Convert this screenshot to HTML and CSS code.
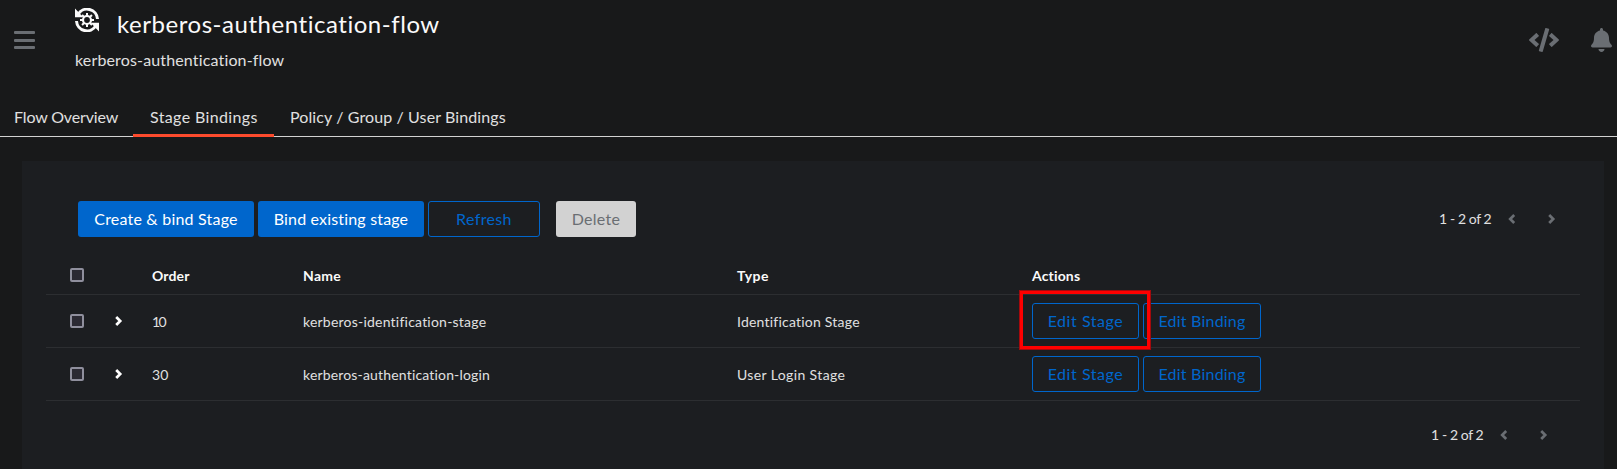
FILE: index.html
```
<!DOCTYPE html>
<html lang="en">
<head>
<meta charset="utf-8">
<title>kerberos-authentication-flow</title>
<link rel="stylesheet" href="styles.css">
</head>
<body>
<svg class="sprite" width="0" height="0">
  <symbol id="left" viewBox="0 0 8 10"><path d="M6.200 1 2.200 5l4 4" fill="none" stroke="currentColor" stroke-width="2.700"/></symbol>
  <symbol id="right" viewBox="0 0 8 10"><path d="M1.200 1l4 4-4 4" fill="none" stroke="currentColor" stroke-width="2.700"/></symbol>
</svg>
<header class="header">
  <button class="burger" aria-label="Menu"><i></i><i></i><i></i></button>
  <div class="heading">
    <div class="title-row">
      <svg class="flow-icon" viewBox="0 0 24 24" fill="none" stroke="currentColor">
        <path d="M3.200 6.200A10.400 10.400 0 0 1 22.500 11M20.800 17.800A10.400 10.400 0 0 1 1.500 13" stroke-width="3"/>
        <path d="M0 .5v8.700h8.300zM24 23.500v-8.700h-8.300z" fill="currentColor" stroke="none"/>
        <circle cx="12" cy="12" r="4" stroke-width="2.200"/>
        <path d="M12 5v3M12 16v3M5 12h3M16 12h3M7.050 7.050l2 2M14.950 14.950l2 2M7.050 16.950l2-2M14.950 9.050l2-2" stroke-width="2"/>
      </svg>
      <h1 class="title">kerberos-authentication-flow</h1>
    </div>
    <p class="subtitle">kerberos-authentication-flow</p>
  </div>
  <div class="tools">
    <svg class="code-icon" viewBox="0 0 640 512" fill="currentColor"><path d="M278.900 511.500l-61-17.700c-6.400-1.800-10-8.500-8.200-14.900L346.200 8.700c1.800-6.400 8.500-10 14.900-8.200l61 17.700c6.400 1.800 10 8.500 8.200 14.900L293.800 503.300c-1.900 6.400-8.500 10.100-14.900 8.200zm-114-112.200l43.500-46.400c4.600-4.900 4.300-12.700-.8-17.200L117 256l90.600-79.700c5.100-4.500 5.500-12.300.8-17.200l-43.500-46.400c-4.500-4.800-12.100-5.100-17-.5L3.800 247.200c-5.100 4.700-5.100 12.800 0 17.500l144.100 135.100c4.900 4.600 12.500 4.400 17-.5zm327.200.6l144.100-135.100c5.100-4.700 5.100-12.800 0-17.500L492.100 112.100c-4.800-4.500-12.400-4.300-17 .5L431.600 159c-4.600 4.900-4.300 12.700.8 17.200L523 256l-90.600 79.700c-5.100 4.500-5.500 12.300-.8 17.200l43.500 46.400c4.500 4.900 12.100 5.100 17 .6z"/></svg>
    <svg class="bell-icon" viewBox="0 0 448 512" fill="currentColor"><path d="M224 512c35.320 0 63.970-28.650 63.970-64H160.030c0 35.350 28.650 64 63.970 64zm215.390-149.710c-19.320-20.760-55.470-51.990-55.470-154.290 0-77.700-54.480-139.900-127.940-155.160V32c0-17.670-14.320-32-31.980-32s-31.980 14.330-31.980 32v20.840C118.560 68.100 64.080 130.300 64.080 208c0 102.300-36.150 133.530-55.470 154.290-6 6.450-8.660 14.160-8.610 21.710.11 16.400 12.980 32 32.100 32h383.800c19.120 0 32-15.600 32.100-32 .05-7.550-2.610-15.270-8.610-21.710z"/></svg>
  </div>
</header>
<nav class="tabs">
  <a class="tab overview">Flow Overview</a>
  <a class="tab stages active">Stage Bindings</a>
  <a class="tab policies">Policy / Group / User Bindings</a>
</nav>
<main class="panel">
  <div class="toolbar">
    <button class="btn primary create">Create &amp; bind Stage</button>
    <button class="btn primary bind">Bind existing stage</button>
    <button class="btn outline refresh">Refresh</button>
    <button class="btn disabled">Delete</button>
    <div class="pager"><span class="count">1 - 2 of 2</span><svg class="chev"><use href="#left"/></svg><svg class="chev"><use href="#right"/></svg></div>
  </div>
  <div class="table">
    <div class="row head">
      <span class="check"></span><span></span><span class="h-order">Order</span><span class="h-name">Name</span><span class="h-type">Type</span><span class="h-actions">Actions</span>
    </div>
    <div class="row">
      <span class="check"></span><svg class="chev expand"><use href="#right"/></svg><span class="cell ten">10</span><span class="cell name">kerberos-identification-stage</span><span class="cell">Identification Stage</span>
      <div class="actions"><button class="btn outline edit-stage marked">Edit Stage</button><button class="btn outline edit-binding">Edit Binding</button></div>
    </div>
    <div class="row">
      <span class="check"></span><svg class="chev expand"><use href="#right"/></svg><span class="cell order">30</span><span class="cell name login">kerberos-authentication-login</span><span class="cell user-login">User Login Stage</span>
      <div class="actions"><button class="btn outline edit-stage">Edit Stage</button><button class="btn outline edit-binding">Edit Binding</button></div>
    </div>
  </div>
  <div class="footer">
    <div class="pager"><span class="count">1 - 2 of 2</span><svg class="chev"><use href="#left"/></svg><svg class="chev"><use href="#right"/></svg></div>
  </div>
</main>
</body>
</html>
```
FILE: styles.css
```
*, *::after { box-sizing: border-box; }
body {
  margin: 0;
  height: 469px;
  overflow: hidden;
  display: flex;
  flex-direction: column;
  background: #18191a;
  color: #e0e0e0;
  font: 16px/24px Lato, "Open Sans", sans-serif;
  font-variant-ligatures: none;
}
button { font: inherit; color: inherit; border: 0; background: none; padding: 0; }
.sprite { position: absolute; }

.header { display: flex; height: 96px; padding-left: 14px; padding-right: 5px; color: #fafafa; }
.burger { width: 21px; height: 18px; margin-top: 31px; display: flex; flex-direction: column; justify-content: space-between; }
.burger i { display: block; width: 21px; height: 3px; border-radius: 1px; background: #6a6e73; }
.heading { margin-left: 40px; flex: 1; }
.title-row { display: flex; height: 48px; }
.flow-icon { width: 24px; height: 24px; margin-top: 8px; }
.title { margin: 8px 0 0 18px; font-size: 24px; line-height: 32px; font-weight: 400; letter-spacing: 0.54px; }
.subtitle { margin: 0; color: #e0e0e0; letter-spacing: 0.15px; }
.tools { display: flex; gap: 32px; height: 24px; margin-top: 28px; color: #6a6e73; }
.code-icon { width: 30px; height: 24px; }
.bell-icon { width: 21px; height: 24px; }

.tabs { display: flex; height: 41px; flex: none; box-shadow: inset 0 -1px #d2d2d2; }
.tab { height: 41px; padding: 9px 0 0 16px; }
.overview { width: 133px; padding-left: 14px; letter-spacing: -0.15px; }
.stages { width: 141px; padding-left: 17px; letter-spacing: 0.36px; }
.active { border-bottom: 3px solid #fd4b2d; }
.policies { letter-spacing: 0.11px; }

.panel { width: 1582px; flex: 1; margin: 24px 0 0 22px; padding: 40px 24px 0; background: #1c1e21; }
.toolbar { display: flex; height: 36px; padding-left: 32px; gap: 4px; }
.btn { height: 36px; border-radius: 3px; line-height: 36px; text-align: center; white-space: nowrap; }
.primary { background: #06c; color: #fff; }
.create { width: 176px; letter-spacing: 0.2px; }
.bind { width: 166px; letter-spacing: 0.17px; }
.outline { border: 1px solid #06c; color: #06c; line-height: 34px; }
.refresh { width: 112px; letter-spacing: 0.36px; }
.disabled { width: 80px; margin-left: 12px; background: #d2d2d2; color: #6a6e73; letter-spacing: 0.27px; }

.pager { display: flex; align-items: center; height: 36px; margin-left: auto; margin-right: 24px; font-size: 14px; }
.count { width: 69px; letter-spacing: -0.4px; }
.chev { width: 8px; height: 10px; color: #6a6e73; }
.pager .chev + .chev { margin-left: 32px; }

.table { margin-top: 20px; }
.row {
  display: grid;
  grid-template-columns: 45px 37px 151px 434px 295px 1fr;
  align-items: center;
  height: 53px;
  padding-left: 24px;
  border-bottom: 1px solid #2c2e31;
  font-size: 14px;
  letter-spacing: 0.22px;
}
.head { height: 38px; font-weight: 700; color: #fafafa; letter-spacing: 0.15px; }
.head .check { margin-bottom: 2px; }
.cell { padding-top: 2px; }
.h-name { letter-spacing: 0.29px; }
.h-type { letter-spacing: 0.48px; }
.login { letter-spacing: 0.17px; }
.user-login { letter-spacing: 0.38px; }
.ten { letter-spacing: -1.5px; }
.check { width: 14px; height: 14px; border: 2px solid #8f8f9d; border-radius: 2px; background: #2b2a33; }
.expand { color: #fff; }
.actions { display: flex; gap: 4px; font-size: 16px; }
.edit-stage { width: 107px; letter-spacing: 0.55px; }
.edit-binding { width: 118px; letter-spacing: 0.21px; }
.marked { position: relative; }
.marked::after {
  content: "";
  position: absolute;
  z-index: 1;
  left: -14px;
  top: -14px;
  width: 132px;
  height: 60px;
  border: 4px solid #f00;
  outline: 1px solid rgba(140, 13, 16, 0.8);
  outline-offset: -1px;
}

.footer { display: flex; height: 36px; margin-top: 16px; padding-right: 8px; }
```
